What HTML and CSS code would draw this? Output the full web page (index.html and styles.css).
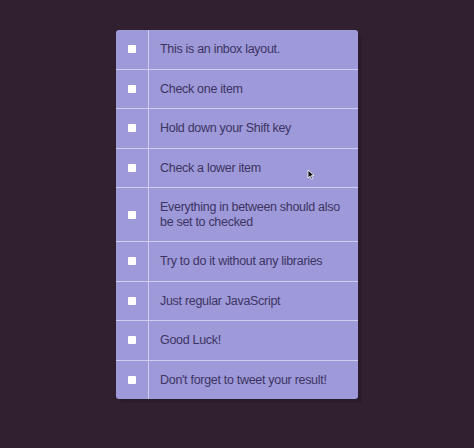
FILE: index.html
```html
<!DOCTYPE html>
<html>
<head>
<meta charset="utf-8">
<link rel="stylesheet" href="styles.css">
</head>
<body>
<div class="inbox">
  <div class="item"><input type="checkbox"><p>This is an inbox layout.</p></div>
  <div class="item"><input type="checkbox"><p>Check one item</p></div>
  <div class="item"><input type="checkbox"><p>Hold down your Shift key</p></div>
  <div class="item"><input type="checkbox"><p>Check a lower item</p></div>
  <div class="item"><input type="checkbox"><p>Everything in between should also be set to checked</p></div>
  <div class="item"><input type="checkbox"><p>Try to do it without any libraries</p></div>
  <div class="item"><input type="checkbox"><p>Just regular JavaScript</p></div>
  <div class="item"><input type="checkbox"><p>Good Luck!</p></div>
  <div class="item"><input type="checkbox"><p>Don't forget to tweet your result!</p></div>
</div>
<svg class="cursor" width="8" height="11" viewBox="0 0 8 11"><path d="M1 1 L1 9 L3 7.2 L4.6 10.3 L5.8 9.7 L4.3 6.7 L7 6.5 Z" fill="#111" stroke="#fff" stroke-width="0.8"/></svg>
</body>
</html>
```
FILE: styles.css
```css
html, body {
  margin: 0;
  padding: 0;
}
body {
  background: #302030;
  font-family: "Liberation Sans", Arial, sans-serif;
  min-height: 448px;
  position: relative;
}
.inbox {
  width: 242px;
  margin: 0 auto;
  position: relative;
  top: 30px;
  background: #9e99d9;
  border-radius: 3px;
  box-shadow: 4px 4px 0 rgba(0, 0, 0, 0.12);
  overflow: hidden;
}
.item {
  display: flex;
  align-items: center;
  border-bottom: 1px solid #cfcdf0;
}
.item:last-child {
  border-bottom: 0;
}
.item input {
  appearance: none;
  -webkit-appearance: none;
  width: 8px;
  height: 8px;
  margin: 0 12px;
  background: #fff;
  border: 0;
  border-radius: 1px;
  flex: none;
}
.item p {
  margin: 0;
  padding: 12px 12px 12px 11px;
  flex: 1;
  font-size: 12.5px;
  letter-spacing: -0.3px;
  line-height: 14.5px;
  color: #3d3463;
  border-left: 1px solid #cfcdf0;
}
.cursor {
  position: absolute;
  left: 307px;
  top: 169px;
}
```
